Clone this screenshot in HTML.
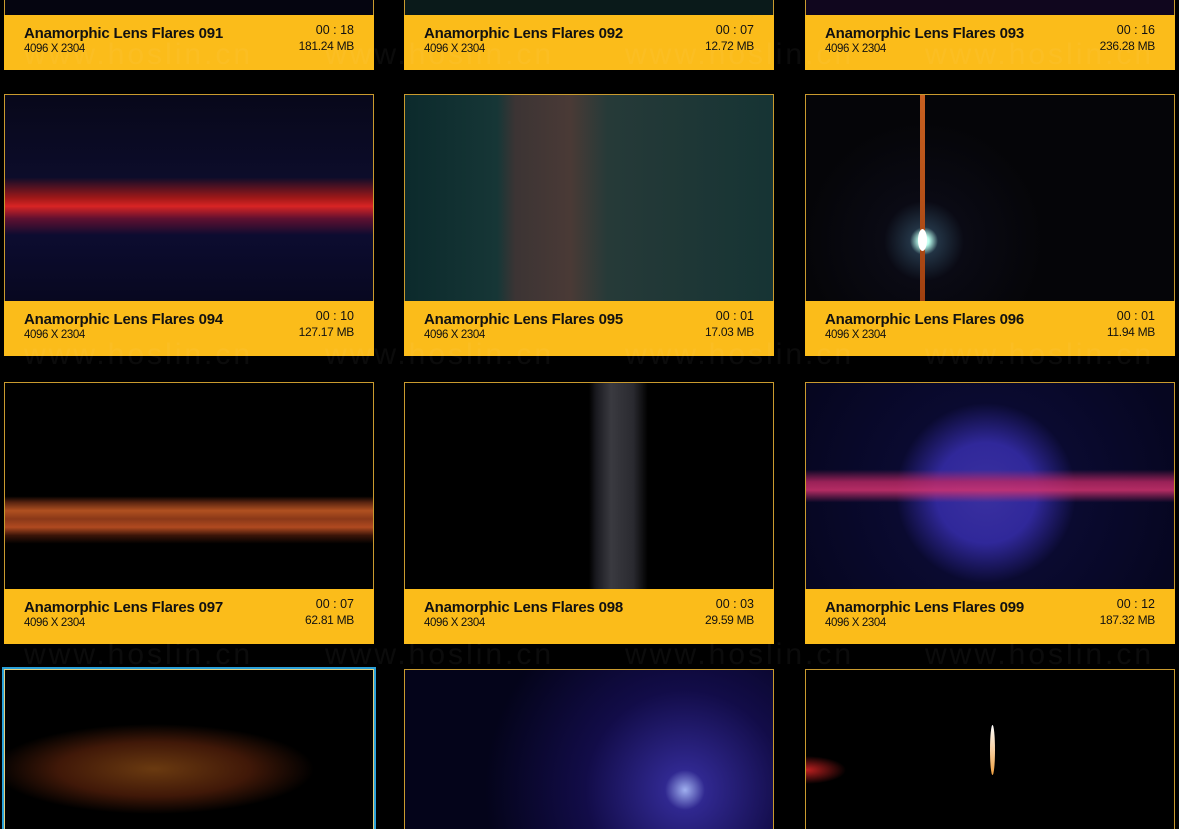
<!DOCTYPE html><html><head><meta charset="utf-8"><style>
html,body{margin:0;width:1179px;height:829px;background:#000;overflow:hidden}
body{position:relative;font-family:"Liberation Sans",sans-serif}
.c{position:absolute;width:370px;height:262px}
.im{position:absolute;left:0;top:0;width:368px;height:206px;border:1px solid #c99a2e;border-bottom:none;overflow:hidden;background:#000}
.b{position:absolute;left:0;top:207px;width:370px;height:55px;background:#fbbc1a;color:#111}
.t{position:absolute;left:20px;top:10px;font-size:15px;font-weight:bold;letter-spacing:-.2px}
.s{position:absolute;left:20px;top:28px;font-size:11.5px;letter-spacing:-.4px}
.r1{position:absolute;right:20px;top:8px;font-size:12.5px}
.r2{position:absolute;right:20px;top:24px;font-size:12px;letter-spacing:-.3px}
.wm{position:absolute;color:rgba(255,255,255,.045);font-size:30px;letter-spacing:3px}
</style></head><body>
<div class="c" style="left:4px;top:-192px"><div class="im" style="background:#050510"></div><div class="b"><div class="t">Anamorphic Lens Flares 091</div><div class="s">4096 X 2304</div><div class="r1">00 : 18</div><div class="r2">181.24 MB</div></div></div>
<div class="c" style="left:404px;top:-192px"><div class="im" style="background:#0a1a1a"></div><div class="b"><div class="t">Anamorphic Lens Flares 092</div><div class="s">4096 X 2304</div><div class="r1">00 : 07</div><div class="r2">12.72 MB</div></div></div>
<div class="c" style="left:805px;top:-192px"><div class="im" style="background:#10061e"></div><div class="b"><div class="t">Anamorphic Lens Flares 093</div><div class="s">4096 X 2304</div><div class="r1">00 : 16</div><div class="r2">236.28 MB</div></div></div>

<div class="c" style="left:4px;top:94px"><div class="im" style="background:linear-gradient(180deg,#08081a 0%,#0c0c2a 40%,#a01818 50%,#d82424 54%,#601030 60%,#0c0c30 68%,#080820 100%)"></div><div class="b"><div class="t">Anamorphic Lens Flares 094</div><div class="s">4096 X 2304</div><div class="r1">00 : 10</div><div class="r2">127.17 MB</div></div></div>
<div class="c" style="left:404px;top:94px"><div class="im" style="background:linear-gradient(90deg,#0c2a2c 0%,#163636 25%,#3c3434 30%,#4a3a36 45%,#263a38 55%,#163434 100%)"></div><div class="b"><div class="t">Anamorphic Lens Flares 095</div><div class="s">4096 X 2304</div><div class="r1">00 : 01</div><div class="r2">17.03 MB</div></div></div>
<div class="c" style="left:805px;top:94px"><div class="im" style="background:radial-gradient(circle at 118px 146px,#fff 0,#bfe 5px,#234 14px,#0a0a14 40px,#050508 120px)"><div style="position:absolute;left:114px;top:0;width:5px;height:206px;background:linear-gradient(#c86020,#a04010)"></div><div style="position:absolute;left:112px;top:134px;width:9px;height:22px;border-radius:50%;background:#fff"></div></div><div class="b"><div class="t">Anamorphic Lens Flares 096</div><div class="s">4096 X 2304</div><div class="r1">00 : 01</div><div class="r2">11.94 MB</div></div></div>

<div class="c" style="left:4px;top:382px"><div class="im" style="background:linear-gradient(180deg,#000 0%,#000 55%,#5a2410 58%,#b05020 62%,#8a3818 66%,#b04a20 70%,#3a1408 74%,#000 78%)"></div><div class="b"><div class="t">Anamorphic Lens Flares 097</div><div class="s">4096 X 2304</div><div class="r1">00 : 07</div><div class="r2">62.81 MB</div></div></div>
<div class="c" style="left:404px;top:382px"><div class="im" style="background:linear-gradient(90deg,#000 0%,#000 50%,#1a1a20 52%,#3a3a40 56%,#2a2a30 62%,#000 66%)"></div><div class="b"><div class="t">Anamorphic Lens Flares 098</div><div class="s">4096 X 2304</div><div class="r1">00 : 03</div><div class="r2">29.59 MB</div></div></div>
<div class="c" style="left:805px;top:382px"><div class="im" style="background:linear-gradient(180deg,transparent 0,transparent 42%,rgba(190,40,100,.8) 48%,rgba(210,50,110,.85) 52%,transparent 58%),radial-gradient(circle at 180px 110px,#3a30a0 0,#30289a 50px,#0a0a30 90px,#060620 200px)"></div><div class="b"><div class="t">Anamorphic Lens Flares 099</div><div class="s">4096 X 2304</div><div class="r1">00 : 12</div><div class="r2">187.32 MB</div></div></div>

<div class="c" style="left:4px;top:669px"><div class="im" style="border:2px solid #2aa0d8;left:-2px;top:-2px;width:370px;box-shadow:inset 0 0 0 1px #e0d080;background:radial-gradient(ellipse 160px 45px at 150px 100px,#6a3a10,#401808 60%,#000)"></div></div>
<div class="c" style="left:404px;top:669px"><div class="im" style="background:radial-gradient(circle at 280px 120px,#a0b0f0 0,#302890 20px,#120c48 100px,#04041a 200px)"></div></div>
<div class="c" style="left:805px;top:669px"><div class="im" style="background:radial-gradient(ellipse 40px 14px at 0 100px,#c02020,#000),#000"><div style="position:absolute;left:184px;top:55px;width:5px;height:50px;border-radius:50%;background:linear-gradient(#fff,#f0a040)"></div></div></div>

<div class="wm" style="left:24px;top:338px">www.hoslin.cn</div><div class="wm" style="left:325px;top:338px">www.hoslin.cn</div><div class="wm" style="left:625px;top:338px">www.hoslin.cn</div><div class="wm" style="left:925px;top:338px">www.hoslin.cn</div>
<div class="wm" style="left:24px;top:638px">www.hoslin.cn</div><div class="wm" style="left:325px;top:638px">www.hoslin.cn</div><div class="wm" style="left:625px;top:638px">www.hoslin.cn</div><div class="wm" style="left:925px;top:638px">www.hoslin.cn</div>
<div class="wm" style="left:24px;top:38px">www.hoslin.cn</div><div class="wm" style="left:325px;top:38px">www.hoslin.cn</div><div class="wm" style="left:625px;top:38px">www.hoslin.cn</div><div class="wm" style="left:925px;top:38px">www.hoslin.cn</div>
</body></html>
